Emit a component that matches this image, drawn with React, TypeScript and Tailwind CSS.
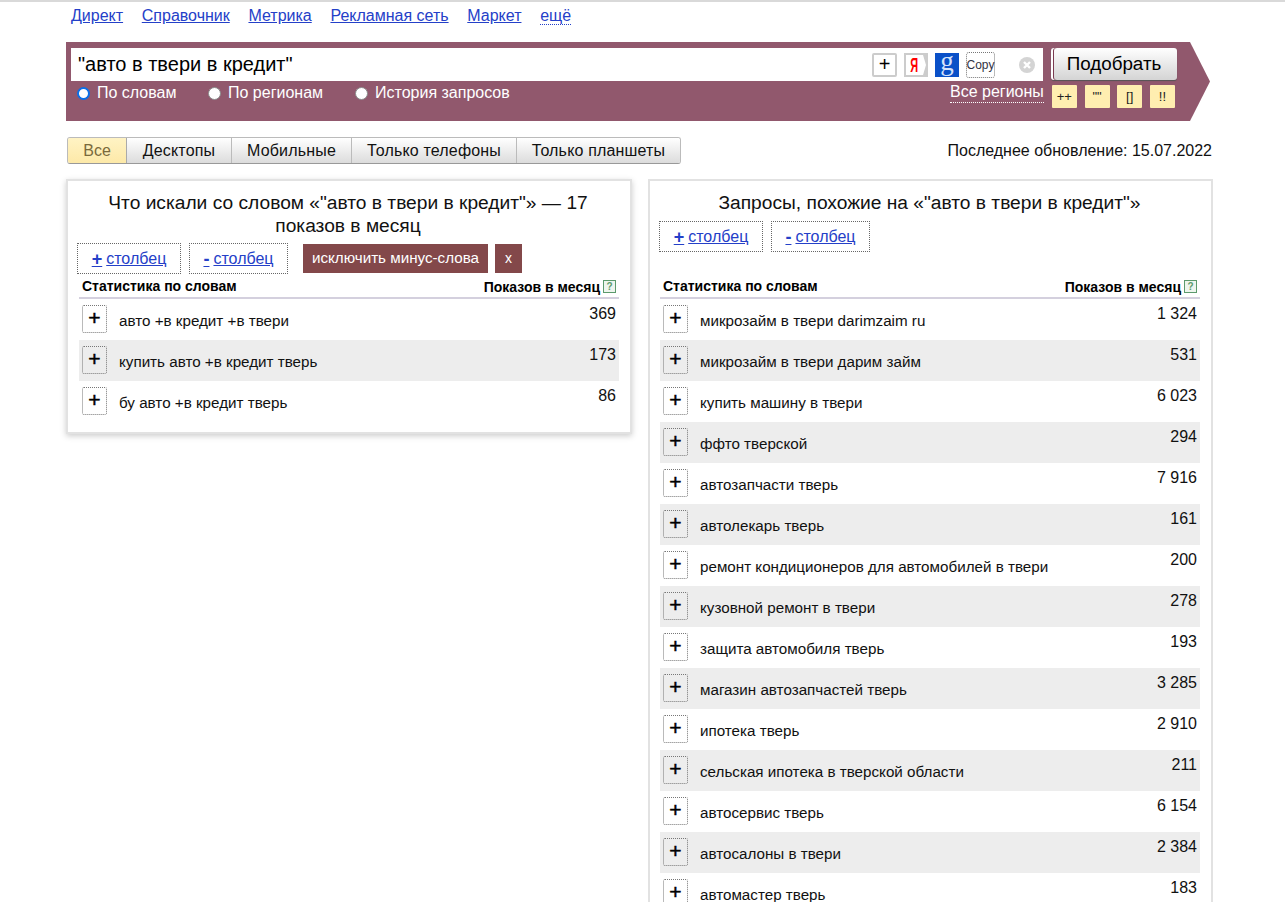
const font = "font-['Liberation_Sans',Arial,sans-serif]";

const navLinks = ["Директ", "Справочник", "Метрика", "Рекламная сеть", "Маркет"];
const tabs: [string, string][] = [
  ["Десктопы", "w-[105px] border-r border-[#bbb]"],
  ["Мобильные", "w-[120px] border-r border-[#bbb]"],
  ["Только телефоны", "w-[165px] border-r border-[#bbb]"],
  ["Только планшеты", "w-[163px]"],
];
const leftRows: [string, string][] = [
  ["авто +в кредит +в твери", "369"],
  ["купить авто +в кредит тверь", "173"],
  ["бу авто +в кредит тверь", "86"],
];
const rightRows: [string, string][] = [
  ["микрозайм в твери darimzaim ru", "1 324"],
  ["микрозайм в твери дарим займ", "531"],
  ["купить машину в твери", "6 023"],
  ["ффто тверской", "294"],
  ["автозапчасти тверь", "7 916"],
  ["автолекарь тверь", "161"],
  ["ремонт кондиционеров для автомобилей в твери", "200"],
  ["кузовной ремонт в твери", "278"],
  ["защита автомобиля тверь", "193"],
  ["магазин автозапчастей тверь", "3 285"],
  ["ипотека тверь", "2 910"],
  ["сельская ипотека в тверской области", "211"],
  ["автосервис тверь", "6 154"],
  ["автосалоны в твери", "2 384"],
  ["автомастер тверь", "183"],
];

function Radio({ on, label, className }: { on?: boolean; label: string; className: string }) {
  return (
    <span className={`flex items-center ${className}`}>
      <span
        className={
          on
            ? "w-[13px] h-[13px] rounded-full bg-white border-[2px] border-[#0b6fe8] mr-[6px]"
            : "w-[13px] h-[13px] rounded-full bg-white border border-[#8a8a8a] mr-[6px]"
        }
      />
      <span className="ml-[1px] text-[16px] leading-[18px] text-white">{label}</span>
    </span>
  );
}

function ColumnButtons() {
  return (
    <>
      <a className="flex items-center justify-center w-[104px] h-[31px] border border-dotted border-[#666] text-[16px] text-[#2440c8] underline">
        <b className="mr-[4px] text-[18px] leading-none">+</b>столбец
      </a>
      <a className="flex items-center justify-center w-[99px] h-[31px] border border-dotted border-[#666] text-[16px] text-[#2440c8] underline ml-[8px]">
        <b className="mr-[4px] text-[18px] leading-none">-</b>столбец
      </a>
    </>
  );
}

function Help() {
  return (
    <span className="inline-flex items-center justify-center w-[13px] h-[13px] border border-[#5c9a6c] text-[10px] leading-none font-bold text-[#5c9a6c] bg-[#eef5ee] ml-[1px] mb-[3px]">
      ?
    </span>
  );
}

function Table({ rows, className }: { rows: [string, string][]; className: string }) {
  return (
    <div className={className}>
      <div className="flex justify-between items-end h-[25px] border-b-[2px] border-[#d4d0de] px-[3px]">
        <b className="text-[14px] leading-[16px] mb-[3px] text-black">Статистика по словам</b>
        <span className="flex items-end mb-[1px]">
          <b className="text-[14px] leading-[16px] text-black mb-[1px] mr-[2px]">Показов в месяц</b>
          <Help />
        </span>
      </div>
      {rows.map(([q, n], i) => (
        <div key={q} className={`flex h-[41px] pl-[3px] pr-[3px] ${i % 2 ? "bg-[#ededed]" : "bg-white"}`}>
          <span className="mt-[6px] flex items-center justify-center w-[25px] h-[28px] border border-dotted border-[#777] rounded-[2px] text-[21px] leading-none [-webkit-text-stroke:0.5px_black] text-black pb-[3px]">
            +
          </span>
          <span className="ml-[12px] mt-[13px] text-[15.2px] leading-[18px] text-[#111] flex-1">{q}</span>
          <span className="mt-[6px] text-[16px] leading-[18px] text-[#111]">{n}</span>
        </div>
      ))}
    </div>
  );
}

export default function App() {
  return (
    <div className={`${font} w-[1285px] h-[902px] overflow-hidden bg-white border-t-2 border-[#d9d9d9]`}>
      <nav className="flex items-center h-[26px] mt-[1px] ml-[71px] gap-[18.7px] text-[16px] text-[#2440c8]">
        {navLinks.map((l) => (
          <a key={l} className="underline">
            {l}
          </a>
        ))}
        <a className="border-b border-dotted border-[#2440c8] leading-[17px]">ещё</a>
      </nav>

      <div className="mt-[13px] ml-[66px] w-[1144px] h-[79px] bg-[#91586d] [clip-path:polygon(0_0,1124px_0,1144px_50%,1124px_100%,0_100%)] flex flex-col">
        <div className="flex mt-[6px] ml-[5px]">
          <div className="w-[972px] h-[33px] bg-white flex items-center">
            <span className="ml-[7px] pb-[2px] text-[20px] text-black flex-1">"авто в твери в кредит"</span>
            <span className="w-[25px] h-[24px] border-2 border-[#ccc] rounded-[2px] flex items-center justify-center text-[20px] leading-none text-black pb-[2px]">
              +
            </span>
            <span className="ml-[7px] w-[24px] h-[24px] relative flex items-center justify-center">
              <svg className="absolute inset-0" width="24" height="24" viewBox="0 0 24 24">
                <rect width="24" height="24" fill="#ccc" />
                <path d="M2 2H19L22 12L19 22H2Z" fill="#fff" />
              </svg>
              <span className="relative text-[20px] font-bold text-[#f00] leading-none scale-x-[0.55] mr-[3px]">Я</span>
            </span>
            <span className="ml-[7px] w-[24px] h-[24px] bg-[#0a50c8] text-[27px] leading-[17px] text-[#d5e2fb] text-center font-['Liberation_Serif',serif]">
              g
            </span>
            <span className="ml-[7px] w-[29px] h-[26px] border border-dotted border-[#777] rounded-[3px] flex items-center justify-center text-[12px] text-[#334]">
              Copy
            </span>
            <svg className="ml-[24px] mr-[8px]" width="16" height="16" viewBox="0 0 16 16">
              <circle cx="8" cy="8" r="8" fill="#d4d4d4" />
              <path d="M5 5l6 6M11 5l-6 6" stroke="#fff" strokeWidth="2.4" />
            </svg>
          </div>
          <button className="ml-[8px] w-[126px] h-[32px] rounded-[3px] bg-gradient-to-b from-white to-[#d4d4d4] shadow-[inset_2px_0_0_#fff,inset_3px_0_0_#7a3a50,0_1px_1px_#555] text-[18.8px] text-black">
            Подобрать
          </button>
        </div>
        <div className="flex mt-[2px] ml-[11px]">
          <div className="flex h-[20px] items-center">
            <Radio on label="По словам" className="w-[131px]" />
            <Radio label="По регионам" className="w-[147px]" />
            <Radio label="История запросов" className="w-[200px]" />
          </div>
          <a className="ml-[395px] text-[16px] leading-[18px] text-white border-b border-dotted border-white h-[20px]">
            Все регионы
          </a>
          <div className="flex gap-[7.7px] ml-[8px] mt-[2px]">
            {["++", '""', "[]", "!!"].map((t) => (
              <span
                key={t}
                className="w-[25px] h-[23px] bg-[#ffeeb0] rounded-[1px] text-[13px] leading-[23px] text-center text-[#222]"
              >
                {t}
              </span>
            ))}
          </div>
        </div>
      </div>

      <div className="flex items-center justify-between mt-[16px] ml-[67px] w-[1145px] h-[27px]">
        <div className="flex h-[27px] rounded-[3px] border border-[#bbb] border-b-[#999] overflow-hidden">
          <span className="w-[59px] flex items-center justify-center bg-gradient-to-b from-[#fff3c4] to-[#fde9a8] text-[16px] text-[#7a6a3c] border-r border-[#aaa]">
            Все
          </span>
          {tabs.map(([t, c]) => (
            <span
              key={t}
              className={`${c} flex items-center justify-center bg-gradient-to-b from-white to-[#dcdcdc] text-[16px] tracking-[0.17px] text-[#111]`}
            >
              {t}
            </span>
          ))}
        </div>
        <span className="text-[16px] text-[#111]">Последнее обновление: 15.07.2022</span>
      </div>

      <div className="flex items-start mt-[15px] ml-[66px] gap-[16px]">
        <section className="w-[566px] h-[255px] border-2 border-[#e2e2e2] shadow-[0_2px_6px_#ccc] bg-white">
          <h2 className="mt-[11px] pl-[29px] pr-[31px] text-center text-[19.2px] leading-[22.5px] font-normal text-[#111]">
            Что искали со словом «"авто в твери в кредит"» — 17 показов в месяц
          </h2>
          <div className="flex mt-[6px] ml-[9px]">
            <ColumnButtons />
            <span className="ml-[15px] mt-[1px] w-[185px] h-[29px] bg-[#83484a] text-white text-[15.2px] flex items-center justify-center">
              исключить минус-слова
            </span>
            <span className="ml-[7px] mt-[1px] w-[27px] h-[29px] bg-[#83484a] text-white text-[14px] flex items-center justify-center">
              x
            </span>
          </div>
          <Table rows={leftRows} className="ml-[11px] mr-[11px]" />
        </section>
        <section className="w-[565px] h-[800px] border-2 border-[#e2e2e2] bg-white">
          <h2 className="mt-[10px] pr-[2px] text-center text-[19.2px] leading-[23px] font-normal text-[#111]">
            Запросы, похожие на «"авто в твери в кредит"»
          </h2>
          <div className="flex mt-[7px] ml-[9px]">
            <ColumnButtons />
          </div>
          <div className="h-[22px]" />
          <Table rows={rightRows} className="ml-[10px] mr-[11px]" />
        </section>
      </div>
    </div>
  );
}
